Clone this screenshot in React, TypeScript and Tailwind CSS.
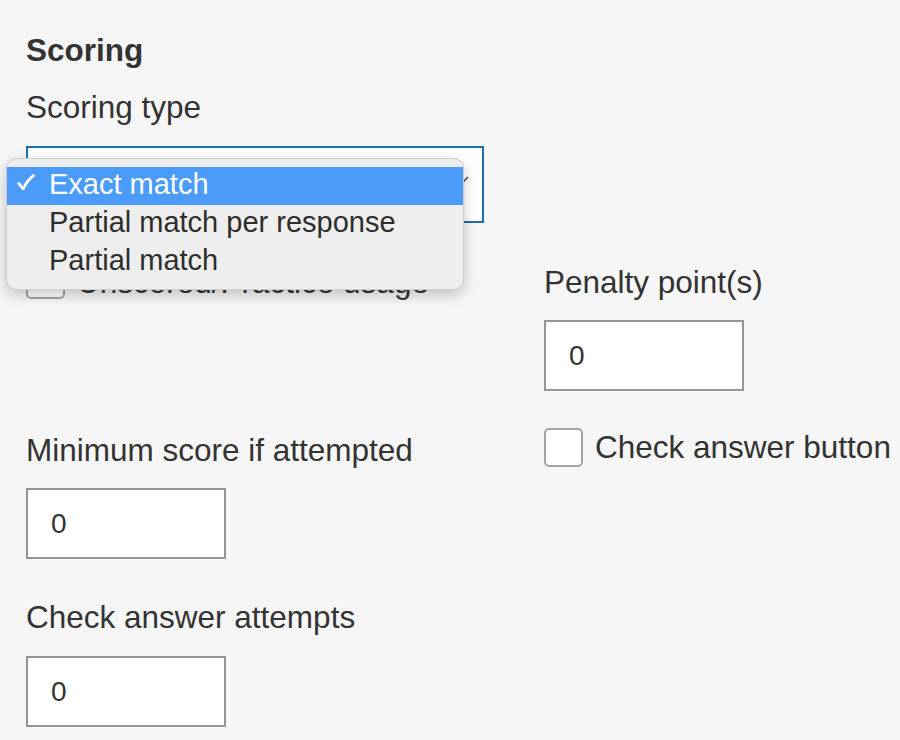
const options = ['Exact match', 'Partial match per response', 'Partial match'];

function Checkbox({ label, textClass = '' }: { label: string; textClass?: string }) {
  return (
    <label className="flex items-start gap-3">
      <span className="w-[39px] h-[39px] shrink-0 rounded-[5px] border-2 border-[#a4a4a4] bg-white" />
      <span className={`text-[31.5px] leading-[36px] ${textClass}`}>{label}</span>
    </label>
  );
}

function NumberField({ className = '' }: { className?: string }) {
  return (
    <input
      type="text"
      readOnly
      defaultValue="0"
      className={`block w-[200px] h-[71px] border-2 border-[#959595] bg-white pl-[23px] text-[28px] text-[#333] outline-none ${className}`}
    />
  );
}

export default function App() {
  return (
    <div
      className="relative w-[900px] h-[740px] overflow-hidden bg-[#f6f6f6] text-[#333]"
      style={{ fontFamily: '"Liberation Sans", Arial, sans-serif' }}
    >
      <div className="pt-[32px] pl-[26px]">
        <h2 className="text-[31.5px] leading-[36px] font-bold">Scoring</h2>
        <div className="mt-[21px] text-[31.5px] leading-[36px]">Scoring type</div>

        {/* Select with open menu */}
        <div className="relative z-10 mt-[21px] w-[458px] h-[77px]">
          <div className="w-full h-full border-2 border-[#1e6fae] bg-white flex items-center pl-[20px] text-[29px]">
            Exact match
          </div>
          <svg
            className="absolute right-[14px] top-[27px] w-[12px] h-[12px]"
            viewBox="0 0 12 12"
            fill="none"
            stroke="#555"
            strokeWidth="1.6"
          >
            <path d="M2 4l4 4 4-4" />
          </svg>

          {/* Dropdown menu */}
          <div className="absolute left-[-20px] top-[12px] w-[458px] py-2 rounded-[10px] bg-[#eeeeee] border border-[#cdcdcd] shadow-[0_5px_14px_rgba(0,0,0,0.22)] overflow-hidden">
            {options.map((opt, i) => (
              <div
                key={opt}
                className={`relative h-[38px] flex items-center pl-[42px] pb-[4px] text-[29px] leading-none ${
                  i === 0 ? 'bg-[#4b9bfa] text-white' : 'text-[#2e2e2e]'
                }`}
              >
                {i === 0 && (
                  <svg
                    className="absolute left-[10px] top-[7px] w-[18px] h-[17px]"
                    viewBox="0 0 18 17"
                    fill="none"
                    stroke="white"
                    strokeWidth="2.8"
                    strokeLinecap="round"
                    strokeLinejoin="round"
                  >
                    <path d="M1.8 9.5 L6.3 14.8 Q9.5 7 16.4 1.6" />
                  </svg>
                )}
                {opt}
              </div>
            ))}
          </div>
        </div>

        {/* Settings grid */}
        <div className="mt-[37px] grid grid-cols-[518px_1fr] gap-y-[37px]">
          <div>
            <Checkbox label="Unscored/Practice usage" textClass="mt-[4px]" />
          </div>
          <div>
            <div className="mt-[4px] text-[31.5px] leading-[36px]">Penalty point(s)</div>
            <NumberField className="mt-5" />
          </div>

          <div>
            <div className="mt-[4px] text-[31.5px] leading-[36px]">Minimum score if attempted</div>
            <NumberField className="mt-5" />
          </div>
          <div>
            <Checkbox label="Check answer button" textClass="mt-[1px]" />
          </div>

          <div>
            <div className="mt-[3px] text-[31.5px] leading-[36px]">Check answer attempts</div>
            <NumberField className="mt-[21px]" />
          </div>
        </div>
      </div>
    </div>
  );
}
